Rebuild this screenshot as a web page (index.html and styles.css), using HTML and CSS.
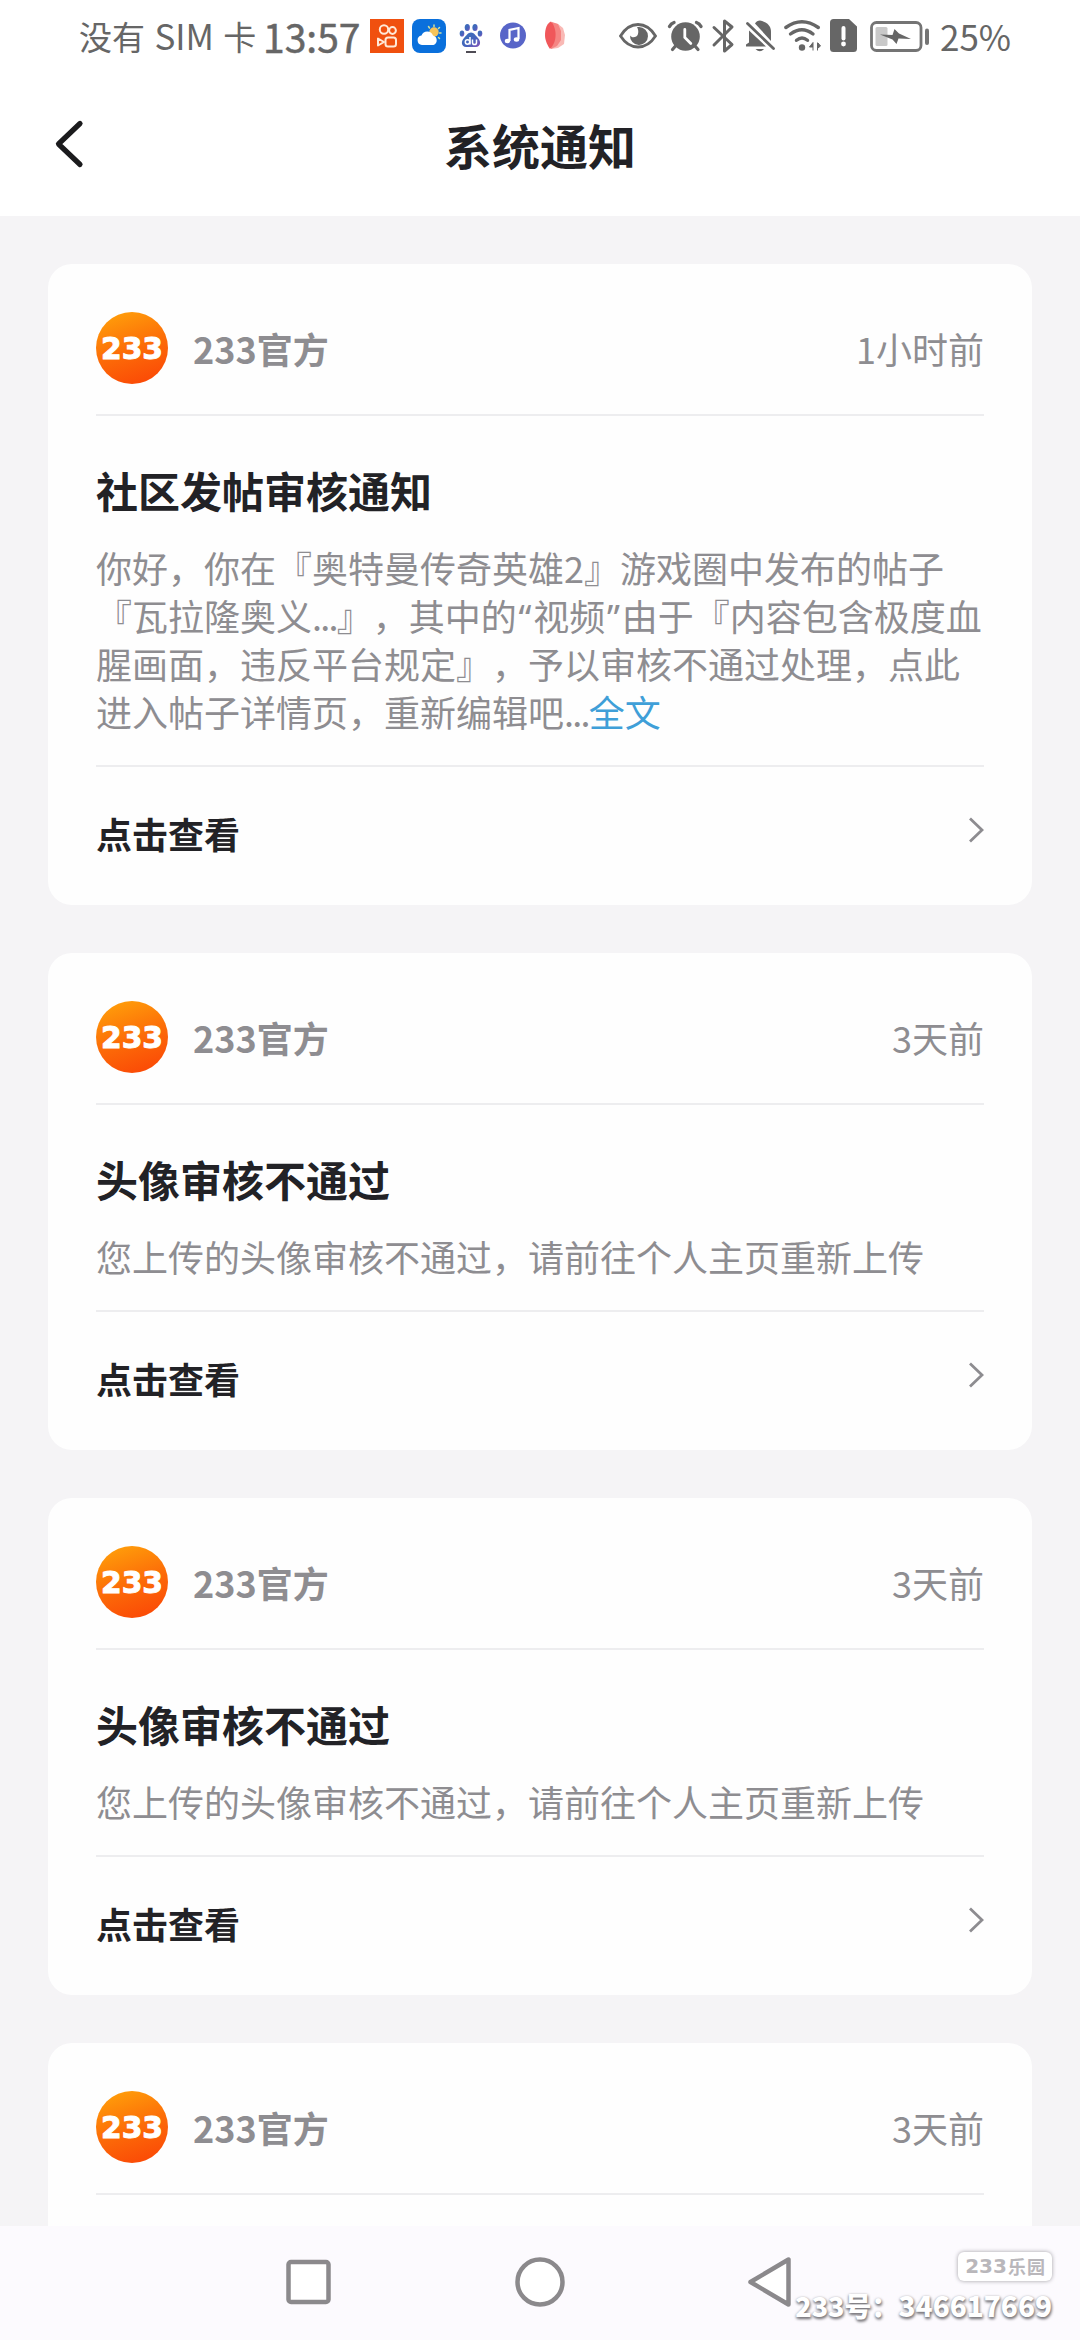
FILE: index.html
```html
<!DOCTYPE html>
<html lang="zh-CN">
<head>
<meta charset="utf-8">
<title>系统通知</title>
<link rel="stylesheet" href="styles.css">
</head>
<body>
<svg class="defs" width="0" height="0" aria-hidden="true">
  <defs>
    <linearGradient id="brand" x1="0.3" y1="0" x2="0.65" y2="1">
      <stop offset="0" stop-color="#ff9d0a"/><stop offset="0.55" stop-color="#fc6a08"/><stop offset="1" stop-color="#fb4a06"/>
    </linearGradient>
    <linearGradient id="paw" x1="0" y1="0" x2="1" y2="1">
      <stop offset="0" stop-color="#3673b8"/><stop offset="0.6" stop-color="#4763bd"/><stop offset="1" stop-color="#8a54b8"/>
    </linearGradient>
    <symbol id="logo" viewBox="0 0 72 72">
      <circle cx="36" cy="36" r="36" fill="url(#brand)"/>
      <text class="logo-text" x="5" y="47" textLength="62" lengthAdjust="spacingAndGlyphs">233</text>
    </symbol>
    <symbol id="arrow" viewBox="0 0 16 26"><path d="M2 1.500 14 13 2 24.500" fill="none" stroke="#8d8c90" stroke-width="2.800"/></symbol>
  </defs>
</svg>
<div class="screen">
  <header class="status">
    <span class="sim">没有 <span class="latin">SIM</span> 卡</span>
    <span class="clock">13:57</span>
    <svg width="38" height="72" viewBox="370 0 38 72">
      <rect x="370" y="19" width="34" height="34" fill="#f0500f"/>
      <g fill="none" stroke="#ffe9d8" stroke-width="2">
        <circle cx="384" cy="29.500" r="4.200"/><circle cx="392.500" cy="30.500" r="3.400"/>
        <rect x="385.500" y="37.500" width="10.500" height="9" rx="2.500"/><path d="M378 38.500v7l6-3.500z" stroke-linejoin="round"/>
      </g>
    </svg>
    <svg width="44" height="72" viewBox="408 0 44 72">
      <rect x="412" y="19" width="34" height="34" rx="8" fill="#0a70dc"/>
      <g stroke="#cfe0a0" stroke-width="1.500" stroke-linecap="round"><path d="M434 25v1.500M428.500 26.500l1 1.500M439.500 27.500l-1 1M441 33h-1.500M439.500 38.500l-1-1"/></g>
      <circle cx="434" cy="32" r="4.700" fill="#f6c45a"/>
      <path d="M422 45a4.800 4.800 0 0 1-.5-9.500 6.200 6.200 0 0 1 11.500 0 5 5 0 0 1 .5 9.500z" fill="#fff"/>
    </svg>
    <svg width="38" height="72" viewBox="452 0 38 72">
      <g fill="url(#paw)">
        <ellipse cx="462" cy="33.500" rx="2.300" ry="3.100"/><ellipse cx="467.300" cy="27.500" rx="2.600" ry="3.600"/>
        <ellipse cx="475" cy="27.500" rx="2.600" ry="3.600"/><ellipse cx="480" cy="33.500" rx="2.300" ry="3.100"/>
        <path d="M471 32.500c3 0 4.500 3 7 5.500 3.500 3.500 2.500 9-2 9h-10c-4.500 0-5.500-5.500-2-9 2.500-2.500 4-5.500 7-5.500z"/>
      </g>
      <g fill="none" stroke="#fff" stroke-width="1.500"><circle cx="467.500" cy="42" r="2.200"/><path d="M470 37v7.500M472.500 39.500v3.200q0 1.800 2 1.800t2-1.800v-3.200"/></g>
      <path d="M466 52h10" stroke="#4f4c55" stroke-width="2"/>
    </svg>
    <svg width="46" height="72" viewBox="490 0 46 72">
      <circle cx="513" cy="35.500" r="13" fill="#5865c8"/>
      <path d="M509.500 41V30l9-2v11" fill="none" stroke="#fff" stroke-width="2.200"/>
      <ellipse cx="507.500" cy="41" rx="2.700" ry="2.200" fill="#fff"/><ellipse cx="516.500" cy="39.500" rx="2.700" ry="2.200" fill="#fff"/>
    </svg>
    <svg width="74" height="72" viewBox="536 0 74 72">
      <path d="M553 23l5 1 5 4 2 7-1 9-6 4-7 1z" fill="#f9b9b5"/>
      <path d="M552 22l6 2 3 7v9l-4 6-6 3z" fill="#f58583"/>
      <path d="M551 21.500c3 3 5 9 4.500 15s-3 10-5.500 12.500c-2-3-5-8-5-14s2-12 6-13.500z" fill="#f0575a"/>
    </svg>
    <svg width="54" height="72" viewBox="610 0 54 72">
      <path d="M620.500 36q7-11.500 17.500-11.500T655.500 36q-7 11-17.500 11T620.500 36z" fill="none" stroke="#666" stroke-width="2.800"/>
      <path d="M639 27a9 9 0 1 1-9 8.500c2 3 7 2 8-1.500.8-3 0-5-1-7z" fill="#666"/>
    </svg>
    <svg width="44" height="72" viewBox="664 0 44 72">
      <circle cx="685.500" cy="36.500" r="14.300" fill="#666"/>
      <path d="M669.500 26.500q1.500-3 4.500-4M701 26.500q-1.500-3-4.500-4" fill="none" stroke="#666" stroke-width="3.400" stroke-linecap="round"/>
      <path d="M675.500 46l-3 3.500M695 46l3 3.500" stroke="#666" stroke-width="3.200" stroke-linecap="round"/>
      <path d="M684.800 29.500v8l6 6" fill="none" stroke="#fff" stroke-width="2.800" stroke-linecap="round"/>
    </svg>
    <svg width="34" height="72" viewBox="708 0 34 72">
      <path d="M714 27.500l18 17-7.500 6.500V21l7.500 6-18 18" fill="none" stroke="#666" stroke-width="3" stroke-linejoin="round" stroke-linecap="round"/>
    </svg>
    <svg width="38" height="72" viewBox="742 0 38 72">
      <path d="M755 23.500c1-2 3-3 5-3 6 1 11 5 11 11v9.500z" fill="#666"/>
      <path d="M749 30.500L766 46.500H746v-2l3-2z" fill="#666"/>
      <path d="M747.500 23.500l26 25" stroke="#666" stroke-width="2.800" stroke-linecap="round"/>
      <path d="M755.500 49h8.500q-4 4.500-8.500 0z" fill="#666"/>
    </svg>
    <svg width="46" height="72" viewBox="780 0 46 72">
      <g fill="none" stroke="#666" stroke-width="3.400" stroke-linecap="round"><path d="M785.800 27.500q16-11.500 32.500 0M790.500 34q11.500-8.500 22.500 0M796.500 40.300q5.500-4.500 11 0"/></g>
      <circle cx="802" cy="47.500" r="3.200" fill="#666"/>
      <path d="M813 42.500v8M813 42.500l-3.500 4.500h3.500M817.500 42.500v8M818 43l2.500 3-2.500 2z" fill="#666" stroke="#666" stroke-width="1"/>
    </svg>
    <svg width="38" height="72" viewBox="826 0 38 72">
      <path d="M833.500 19H849l8 7.500V48.500a3.500 3.500 0 0 1-3.500 3.500h-20a3.500 3.500 0 0 1-3.500-3.500v-26a3.500 3.500 0 0 1 3.500-3.500z" fill="#666"/>
      <path d="M843.500 28v10.500" stroke="#fff" stroke-width="4" stroke-linecap="round"/><circle cx="843.500" cy="44" r="2.400" fill="#fff"/>
    </svg>
    <svg width="76" height="72" viewBox="864 0 76 72">
      <rect x="871.500" y="22.500" width="49.500" height="28" rx="5" fill="none" stroke="#747474" stroke-width="2.800"/>
      <rect x="875.500" y="27" width="12" height="19" rx="1.500" fill="#c9c9c9"/>
      <path d="M880 34.500l12.500.5 2-6 4.500 4.500L911 39l-12.500-.5-2 5.500-4-4.500z" fill="#666"/>
      <rect x="925" y="28.500" width="4" height="16.500" rx="2" fill="#747474"/>
    </svg>
    <span class="percent">25%</span>
  </header>

  <nav class="title-bar">
    <svg class="back" width="32" height="50" viewBox="0 0 32 50"><path d="M26 4.500 4.500 25 26 45.500" fill="none" stroke="#1b1b1d" stroke-width="5.200" stroke-linecap="round" stroke-linejoin="round"/></svg>
    <h1>系统通知</h1>
  </nav>

  <main class="list">
    <article class="card">
      <div class="source"><svg class="avatar"><use href="#logo"/></svg><span class="name">233官方</span><time>1小时前</time></div>
      <div class="message">
        <h2>社区发帖审核通知</h2>
        <p>你好，你在『奥特曼传奇英雄2』游戏圈中发布的帖子<br>『瓦拉隆奥义<span class="dots">...</span>』，其中的<span class="quote">“</span>视频<span class="quote">”</span>由于『内容包含极度血<br>腥画面，违反平台规定』，予以审核不通过处理，点此<br>进入帖子详情页，重新编辑吧<span class="dots">...</span><a>全文</a></p>
      </div>
      <div class="action"><span>点击查看</span><svg class="arrow"><use href="#arrow"/></svg></div>
    </article>
    <article class="card">
      <div class="source"><svg class="avatar"><use href="#logo"/></svg><span class="name">233官方</span><time>3天前</time></div>
      <div class="message">
        <h2>头像审核不通过</h2>
        <p>您上传的头像审核不通过，请前往个人主页重新上传</p>
      </div>
      <div class="action"><span>点击查看</span><svg class="arrow"><use href="#arrow"/></svg></div>
    </article>
    <article class="card">
      <div class="source"><svg class="avatar"><use href="#logo"/></svg><span class="name">233官方</span><time>3天前</time></div>
      <div class="message">
        <h2>头像审核不通过</h2>
        <p>您上传的头像审核不通过，请前往个人主页重新上传</p>
      </div>
      <div class="action"><span>点击查看</span><svg class="arrow"><use href="#arrow"/></svg></div>
    </article>
    <article class="card">
      <div class="source"><svg class="avatar"><use href="#logo"/></svg><span class="name">233官方</span><time>3天前</time></div>
      <div class="message"></div>
    </article>
  </main>

  <footer class="system-nav">
    <svg width="60" height="60" viewBox="0 0 60 60"><rect x="9.500" y="9" width="40" height="40" rx="2.500"/></svg>
    <svg width="60" height="60" viewBox="0 0 60 60"><circle cx="30" cy="29" r="22.500"/></svg>
    <svg width="60" height="60" viewBox="0 0 60 60"><path d="M9.500 29 47.500 6.500V51.500z"/></svg>
  </footer>

  <div class="watermark">
    <div class="badge"><span class="badge-num">233</span><span class="badge-le">乐</span><span class="badge-yuan">园</span></div>
    <div class="uid"><span class="uid-label">233号：</span><span class="uid-num">346617669</span></div>
  </div>
</div>
</body>
</html>
```
FILE: styles.css
```css
* { box-sizing: border-box; margin: 0; padding: 0; }

body {
  width: 1080px;
  height: 2340px;
  overflow: hidden;
  font-family: "Noto Sans CJK SC", sans-serif;
  color: #222226;
  text-spacing-trim: space-all;
}

svg { display: block; flex: none; }
.defs { position: absolute; }

.screen {
  position: relative;
  display: flex;
  flex-direction: column;
  height: 2340px;
  background: #f5f4f6;
}

/* Status bar */
.status {
  display: flex;
  align-items: center;
  height: 72px;
  padding-left: 79px;
  background: #fff;
  color: #666;
  white-space: nowrap;
  flex: none;
}
.sim { width: 184px; font-size: 33px; line-height: 72px; word-spacing: 2px; }
.latin { font-size: 35px; line-height: 1; }
.clock { width: 107px; font: 39px/70px "Noto Sans CJK SC", sans-serif; -webkit-text-stroke: 0.5px #666; }
.percent { font-size: 35px; line-height: 72px; }

/* Title bar */
.title-bar {
  display: grid;
  grid-template-columns: 120px 1fr 120px;
  align-items: center;
  height: 144px;
  background: #fff;
  flex: none;
}
.back { margin-left: 54px; }
.title-bar h1 { font-size: 48px; font-weight: 700; line-height: 72px; text-align: center; }

/* Notification list */
.list {
  display: flex;
  flex-direction: column;
  gap: 48px;
  flex: 1;
  min-height: 0;
  padding: 48px 48px 0;
  overflow: hidden;
}
.card {
  flex: none;
  padding: 48px 48px 0;
  border-radius: 24px;
  background: #fefefe;
}
.source {
  display: flex;
  align-items: center;
  height: 104px;
  padding-bottom: 30px;
  border-bottom: 2px solid #ededef;
}
.avatar { width: 72px; height: 72px; }
.logo-text { font: 700 31px "DejaVu Sans", sans-serif; fill: #fff; stroke: #fff; stroke-width: 1; }
.name { margin-left: 25px; font-size: 36px; font-weight: 700; color: #8e8d91; }
.source time { margin-left: auto; font-size: 36px; color: #8e8d91; }

.message {
  padding: 44px 0 30px;
  border-bottom: 2px solid #ededef;
}
.message h2 { font-size: 42px; font-weight: 700; line-height: 60px; }
.message p {
  margin-top: 23px;
  font-size: 36px;
  line-height: 48px;
  color: #8e8d91;
  white-space: nowrap;
}
.message a { color: #3f9fd8; }
.dots { letter-spacing: -1.8px; }
.quote { display: inline-block; width: 16.5px; font-family: "Noto Sans", sans-serif; line-height: 1; text-align: center; }

.action {
  display: flex;
  justify-content: space-between;
  align-items: center;
  height: 138px;
  padding-bottom: 6px;
  font-size: 36px;
  font-weight: 700;
}
.arrow { width: 16px; height: 26px; margin-bottom: 6px; }

/* System navigation */
.system-nav {
  display: flex;
  justify-content: center;
  align-items: center;
  gap: 171px;
  height: 114px;
  background: #fcfafe;
  flex: none;
}
.system-nav svg { fill: #fff; stroke: #8b898c; stroke-width: 4.500; stroke-linejoin: round; }

/* Watermark over the bottom corner */
.watermark {
  position: absolute;
  right: 28px;
  bottom: 16px;
  display: flex;
  flex-direction: column;
  align-items: flex-end;
  gap: 6px;
  white-space: nowrap;
}
.badge {
  display: flex;
  justify-content: center;
  align-items: center;
  width: 94px;
  height: 29px;
  gap: 1px;
  border-radius: 6px;
  background: #fff;
  box-shadow: 0 0 4px #a09ea4;
  color: #b9b7bb;
  font-size: 18px;
  font-weight: 700;
}
.badge-num { font: 700 20px/29px "DejaVu Sans", sans-serif; }
.badge-le { line-height: 29px; }
.badge-yuan { line-height: 29px; }
.uid {
  display: flex;
  font-size: 28px;
  font-weight: 900;
  line-height: 37px;
  color: #fff;
  text-shadow: 0 1px 3px #77757a, 1px 2px 3px #8a888c;
}
.uid-label { font-size: 27px; }
```
